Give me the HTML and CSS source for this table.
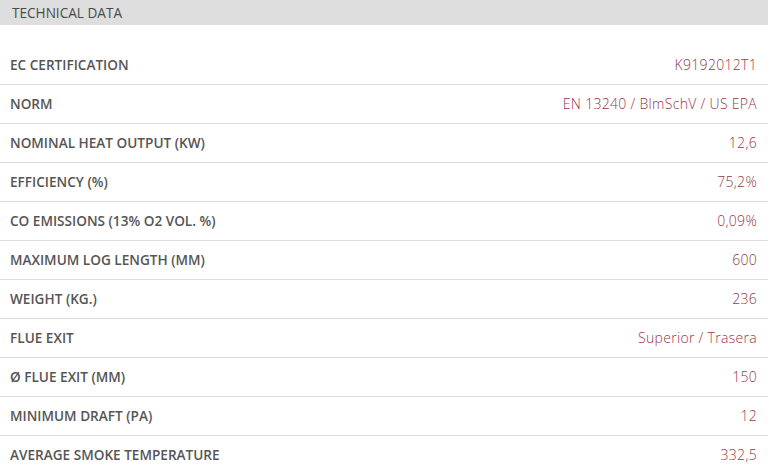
FILE: index.html
```html
<!DOCTYPE html>
<html lang="en">
<head>
<meta charset="utf-8">
<link rel="stylesheet" href="styles.css">
<title>Technical data</title>
</head>
<body>
<section class="tech">
  <div class="tech-head">TECHNICAL DATA</div>
  <dl class="tech-list">
    <div class="tech-row"><dt>EC CERTIFICATION</dt><dd>K9192012T1</dd></div>
    <div class="tech-row"><dt>NORM</dt><dd>EN 13240 / BlmSchV / US EPA</dd></div>
    <div class="tech-row"><dt>NOMINAL HEAT OUTPUT (KW)</dt><dd>12,6</dd></div>
    <div class="tech-row"><dt>EFFICIENCY (%)</dt><dd>75,2%</dd></div>
    <div class="tech-row"><dt>CO EMISSIONS (13% O2 VOL. %)</dt><dd>0,09%</dd></div>
    <div class="tech-row"><dt>MAXIMUM LOG LENGTH (MM)</dt><dd>600</dd></div>
    <div class="tech-row"><dt>WEIGHT (KG.)</dt><dd>236</dd></div>
    <div class="tech-row"><dt>FLUE EXIT</dt><dd>Superior / Trasera</dd></div>
    <div class="tech-row"><dt>Ø FLUE EXIT (MM)</dt><dd>150</dd></div>
    <div class="tech-row"><dt>MINIMUM DRAFT (PA)</dt><dd>12</dd></div>
    <div class="tech-row"><dt>AVERAGE SMOKE TEMPERATURE</dt><dd>332,5</dd></div>
  </dl>
</section>
</body>
</html>
```
FILE: styles.css
```css
html, body {
  margin: 0;
  padding: 0;
  background: #fff;
}
body {
  font-family: "Open Sans", "DejaVu Sans", sans-serif;
}
.tech {
  width: 768px;
}
.tech-head {
  height: 25px;
  background: #dedede;
  color: #4a4a4a;
  font-size: 13.6px;
  line-height: 25px;
  padding-left: 12px;
}
.tech-list {
  margin: 21px 0 0;
  padding: 0;
}
.tech-row {
  display: flex;
  align-items: center;
  justify-content: space-between;
  height: 36px;
  border-bottom: 1px solid #dcdcdc;
  padding: 0 11px 2px 10px;
}
.tech-row dt {
  font-size: 13.6px;
  font-weight: 600;
  color: #555;
}
.tech-row dd {
  margin: 0;
  font-size: 14px;
  font-weight: 300;
  letter-spacing: 0.3px;
  color: #98364a;
}
```
